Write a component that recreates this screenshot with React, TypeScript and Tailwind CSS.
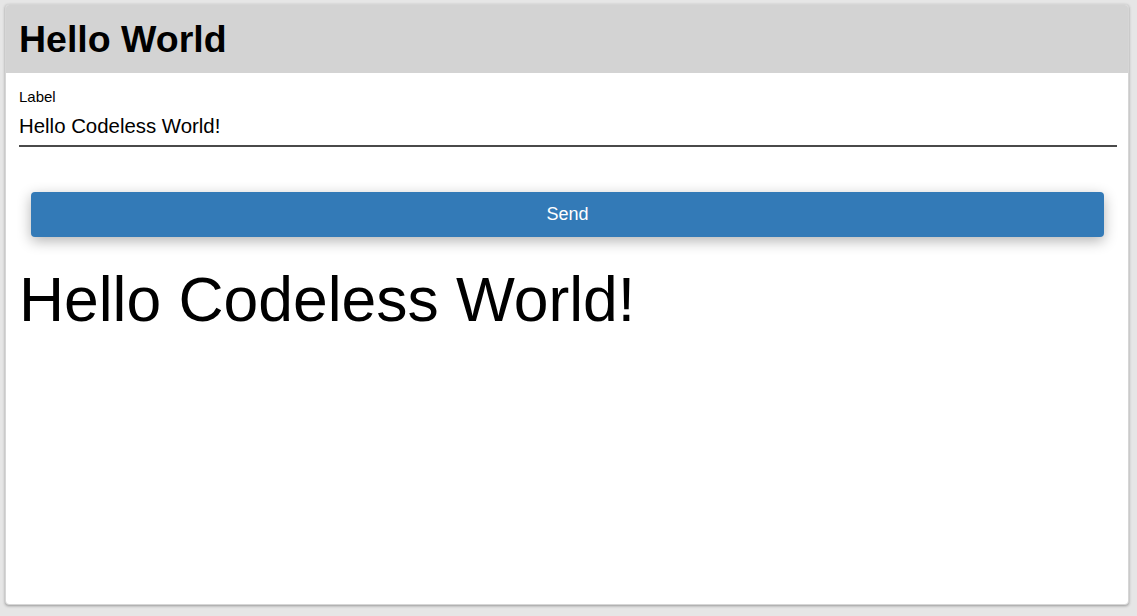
import { useState } from 'react'

const App = () => {
  const [text, setText] = useState('Hello Codeless World!')
  const [shown, setShown] = useState('Hello Codeless World!')

  return (
    <div className="min-h-[616px] bg-[#e6e6e6] pt-[4px] pl-[5px] pr-[8px] font-['Liberation_Sans',Arial,sans-serif] text-black">
      <div className="h-[601px] overflow-hidden rounded-[4px] border border-[#d6d6d6] bg-white shadow-[0_1px_3px_rgba(0,0,0,0.35)]">
        <div className="flex h-[68px] items-center bg-[#d3d3d3] px-[13px] pt-[2px]">
          <h1 className="text-[37.5px] font-bold leading-none">Hello World</h1>
        </div>

        <div className="pl-[13px] pr-[11px] pt-[15px]">
          <label className="block text-[15px] leading-[17px]">Label</label>
          <input
            className="mt-[10px] block w-full border-b-2 border-[#4a4a4a] bg-transparent pb-[7px] text-[20.4px] leading-[23px] outline-none"
            value={text}
            onChange={(e) => setText(e.target.value)}
          />

          <div className="pl-[12px] pr-[13px] pt-[45px]">
            <button
              className="flex h-[45px] w-full items-center justify-center rounded-[4px] bg-[#337ab7] text-[18px] text-white shadow-[0_4px_14px_rgba(0,0,0,0.3)]"
              onClick={() => setShown(text)}
            >
              Send
            </button>
          </div>

          <div className="mt-[27px] text-[62.4px] leading-[71px]">{shown}</div>
        </div>
      </div>
    </div>
  )
}

export default App
